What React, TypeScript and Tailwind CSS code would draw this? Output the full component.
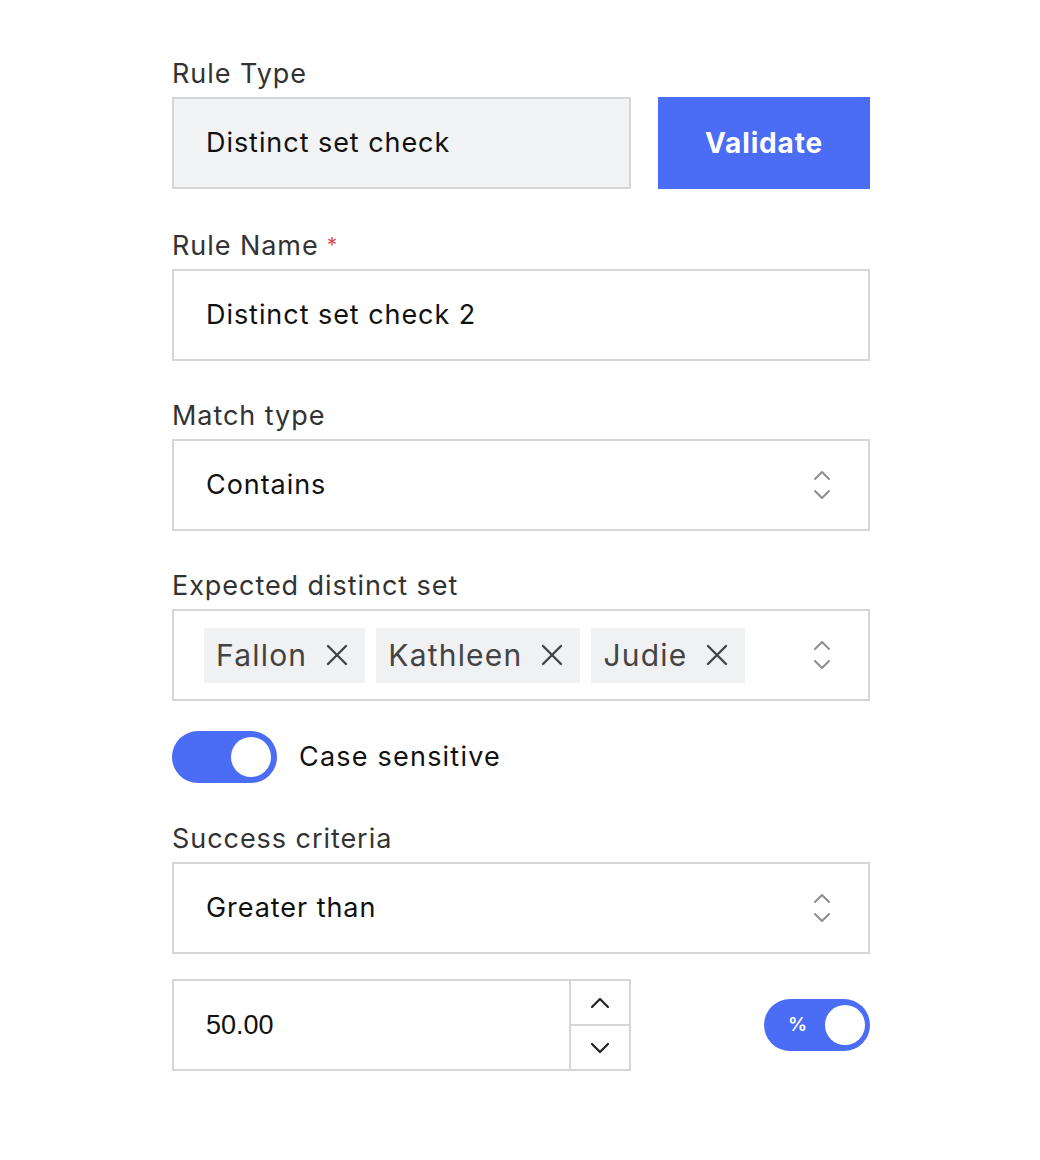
const font = { fontFamily: "Inter, 'Open Sans', sans-serif" };

function Chevrons() {
    return (
        <svg width="20" height="32" viewBox="0 0 20 32" fill="none" stroke="#8e8e8e" strokeWidth="2" strokeLinecap="round" strokeLinejoin="round">
            <path d="M3 10 L10 3 L17 10" />
            <path d="M3 22 L10 29 L17 22" />
        </svg>
    );
}

function Label({ children, required }: { children: React.ReactNode; required?: boolean }) {
    return (
        <div className="mb-[7px] text-[27px] leading-[32px] tracking-[0.035em] text-[#333]">
            {children}
            {required && <span className="ml-2 align-top text-[21px] text-[#e2504c]">*</span>}
        </div>
    );
}

function SelectBox({ value }: { value: string }) {
    return (
        <div className="flex h-[92px] items-center justify-between border-2 border-[#d6d6d6] bg-white pl-[32px] pr-[36px]">
            <span className="text-[27px] tracking-[0.035em] text-[#111]">{value}</span>
            <Chevrons />
        </div>
    );
}

function Chip({ label }: { label: string }) {
    return (
        <div className="flex h-[55px] items-center gap-[19px] bg-[#f0f1f3] pl-[12px] pr-[17px]">
            <span className="text-[30px] tracking-[0.04em] text-[#444]">{label}</span>
            <svg width="22" height="22" viewBox="0 0 22 22" fill="none" stroke="#444" strokeWidth="2.4" strokeLinecap="round">
                <path d="M2 2 L20 20 M20 2 L2 20" />
            </svg>
        </div>
    );
}

export default function App() {
    return (
        <div className="min-h-[1160px] bg-white" style={font}>
            <div className="ml-[172px] w-[698px] pt-[58px]">
                <Label>Rule Type</Label>
                <div className="flex gap-[27px]">
                    <div className="flex h-[92px] w-[459px] items-center border-2 border-[#d6d6d6] bg-[#f2f3f4] pl-[32px]">
                        <span className="text-[27px] tracking-[0.035em] text-[#111]">Distinct set check</span>
                    </div>
                    <button className="flex h-[92px] flex-1 items-center justify-center bg-[#4b6cf5] text-[28px] font-bold tracking-[0.03em] text-white">
                        Validate
                    </button>
                </div>

                <div className="mt-[41px]">
                    <Label required>Rule Name</Label>
                    <div className="flex h-[92px] items-center border-2 border-[#d6d6d6] bg-white pl-[32px]">
                        <span className="text-[27px] tracking-[0.035em] text-[#111]">Distinct set check 2</span>
                    </div>
                </div>

                <div className="mt-[39px]">
                    <Label>Match type</Label>
                    <SelectBox value="Contains" />
                </div>

                <div className="mt-[39px]">
                    <Label>Expected distinct set</Label>
                    <div className="flex h-[92px] items-center justify-between border-2 border-[#d6d6d6] bg-white pl-[30px] pr-[36px]">
                        <div className="flex gap-[11px]">
                            <Chip label="Fallon" />
                            <Chip label="Kathleen" />
                            <Chip label="Judie" />
                        </div>
                        <Chevrons />
                    </div>
                </div>

                <div className="mt-[30px] flex items-center gap-[22px]">
                    <div className="flex h-[52px] w-[105px] items-center justify-end rounded-full bg-[#4b6cf5] pr-[6px]">
                        <div className="h-[40px] w-[40px] rounded-full bg-white" />
                    </div>
                    <span className="text-[27px] tracking-[0.045em] text-[#111]">Case sensitive</span>
                </div>

                <div className="mt-[40px]">
                    <Label>Success criteria</Label>
                    <SelectBox value="Greater than" />
                </div>

                <div className="mt-[25px] flex items-center justify-between">
                    <div className="flex h-[92px] w-[459px] border-2 border-[#d6d6d6] bg-white">
                        <div className="flex flex-1 items-center pl-[32px]">
                            <span className="text-[27px] text-[#111]" style={{ fontFamily: "'Liberation Sans', Arial, sans-serif" }}>50.00</span>
                        </div>
                        <div className="flex w-[60px] flex-col border-l-2 border-[#d6d6d6]">
                            <div className="flex flex-1 items-center justify-center border-b-2 border-[#d6d6d6]">
                                <svg width="22" height="14" viewBox="0 0 22 14" fill="none" stroke="#222" strokeWidth="2.2" strokeLinecap="round" strokeLinejoin="round">
                                    <path d="M3 11 L11 3 L19 11" />
                                </svg>
                            </div>
                            <div className="flex flex-1 items-center justify-center">
                                <svg width="22" height="14" viewBox="0 0 22 14" fill="none" stroke="#222" strokeWidth="2.2" strokeLinecap="round" strokeLinejoin="round">
                                    <path d="M3 3 L11 11 L19 3" />
                                </svg>
                            </div>
                        </div>
                    </div>
                    <div className="flex h-[52px] w-[106px] items-center justify-between rounded-full bg-[#4b6cf5] pl-[24px] pr-[5px]">
                        <span className="text-[19px] font-semibold text-white">%</span>
                        <div className="h-[40px] w-[40px] rounded-full bg-white" />
                    </div>
                </div>
            </div>
        </div>
    );
}
